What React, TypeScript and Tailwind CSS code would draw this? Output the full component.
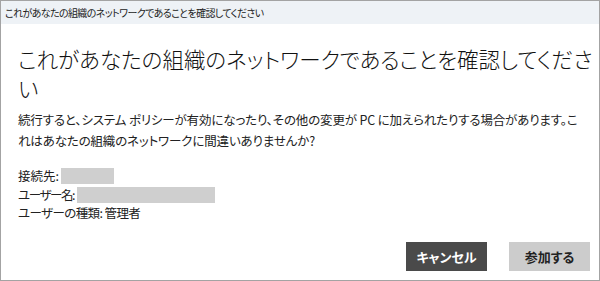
export default function App() {
  const jp = "font-['Noto_Sans_CJK_JP',sans-serif] [font-feature-settings:'palt']"

  return (
    <div className={`w-[600px] h-[281px] flex flex-col bg-white border border-[#a3a3a3] text-[#1a1a1a] ${jp}`}>
      {/* Title bar */}
      <div className="h-[23px] shrink-0 bg-[#eef2f6] flex items-center pl-[4px] text-[10px] tracking-[-0.6px] text-[#222]">
        これがあなたの組織のネットワークであることを確認してください
      </div>

      <div className="flex-1 flex flex-col pl-[17px] pr-[4px]">
        <h1 className="mt-[20px] text-[21.5px] leading-[29px] font-light text-[#111]">
          これがあなたの組織のネットワークであることを確認してください
        </h1>

        <p className="mt-[7px] text-[12.5px] tracking-[-0.15px] leading-[21px] text-[#222]">
          続行すると、システム ポリシーが有効になったり、その他の変更が PC に加えられたりする場合があります。こ
          <br />
          れはあなたの組織のネットワークに間違いありませんか?
        </p>

        <div className="mt-[16px] flex flex-col text-[12.5px] leading-[18.5px] text-[#222]">
          <div className="flex items-center">
            接続先:
            <span className="ml-[2px] w-[53px] h-[16px] bg-[#cfcfcf]" />
          </div>
          <div className="flex items-center">
            <span className="tracking-[-1.4px]">ユーザー名:</span>
            <span className="ml-[3px] w-[138px] h-[16px] bg-[#cfcfcf]" />
          </div>
          <div className="tracking-[-0.6px]">ユーザーの種類: 管理者</div>
        </div>

        <div className="mt-auto mb-[9px] mr-[5px] flex justify-end gap-[22px]">
          <button className="w-[81px] h-[29px] bg-[#4a4a4a] text-white text-[13px] font-bold">
            キャンセル
          </button>
          <button className="w-[81px] h-[29px] bg-[#cccccc] text-[#222] text-[13px] font-bold">
            参加する
          </button>
        </div>
      </div>
    </div>
  )
}
